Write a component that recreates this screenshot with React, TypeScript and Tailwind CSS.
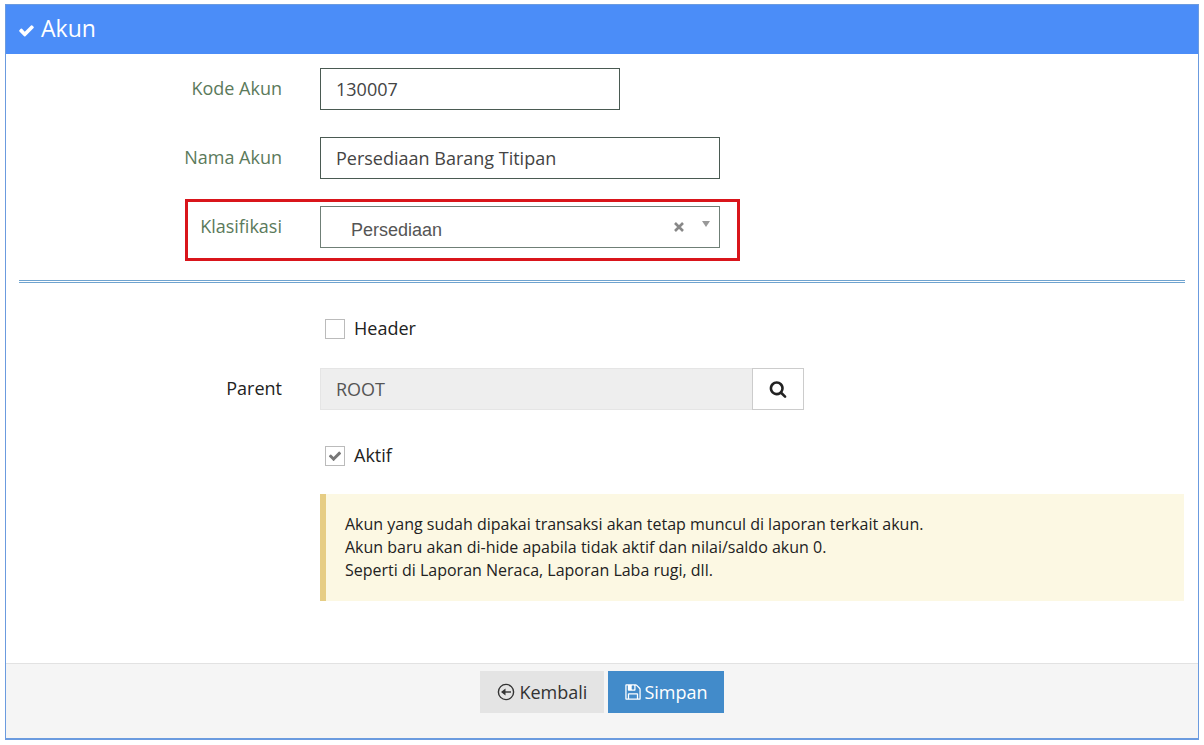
import { useState } from "react";
import type { ReactNode } from "react";

const KLASIFIKASI = ["Kas & Bank", "Piutang", "Persediaan", "Aktiva Tetap"];

const CHECK_PATH =
  "M1671 566q0 40-28 68l-724 724-136 136q-28 28-68 28t-68-28l-136-136-362-362q-28-28-28-68t28-68l136-136q28-28 68-28t68 28l294 295 656-657q28-28 68-28t68 28l136 136q28 28 28 68z";
const SEARCH_PATH =
  "M1216 832q0-185-131.5-316.5t-316.5-131.5-316.5 131.5-131.5 316.5 131.5 316.5 316.5 131.5 316.5-131.5 131.5-316.5zm512 832q0 52-38 90t-90 38q-54 0-90-38l-343-342q-179 124-399 124-143 0-273.5-55.5t-225-150-150-225-55.5-273.5 55.5-273.5 150-225 225-150 273.5-55.5 273.5 55.5 225 150 150 225 55.5 273.5q0 220-124 399l343 343q37 37 37 90z";
const SAVE_PATH =
  "M512 1536h768v-384h-768v384zm896 0h128v-896q0-14-10-38.5t-20-34.5l-281-281q-10-10-34-20t-39-10v416q0 40-28 68t-68 28h-576q-40 0-68-28t-28-68v-416h-128v1280h128v-416q0-40 28-68t68-28h832q40 0 68 28t28 68v416zm-384-928v-320q0-13-9.5-22.5t-22.5-9.5h-192q-13 0-22.5 9.5t-9.5 22.5v320q0 13 9.5 22.5t22.5 9.5h192q13 0 22.5-9.5t9.5-22.5zm640 32v928q0 40-28 68t-68 28h-1344q-40 0-68-28t-28-68v-1344q0-40 28-68t68-28h928q40 0 88 20t76 48l280 280q28 28 48 76t20 88z";

function Icon({ d, size }: { d: string; size: number }) {
  return (
    <svg width={size} height={size} viewBox="0 0 1792 1792" fill="currentColor" className="shrink-0" aria-hidden="true">
      <path d={d} />
    </svg>
  );
}

interface RowProps {
  id: string;
  label: string;
  labelClass?: string;
  children: ReactNode;
}

function Row({ id, label, labelClass = "text-[#5b7a5b]", children }: RowProps) {
  return (
    <div className="flex">
      <label htmlFor={id} className={`w-1/4 shrink-0 pt-2 pr-[22px] text-right leading-6 ${labelClass}`}>
        {label}
      </label>
      <div className="flex-1 pl-4 pr-[14px]">{children}</div>
    </div>
  );
}

function CheckRow({ label, checked, onChange }: { label: string; checked: boolean; onChange: (v: boolean) => void }) {
  return (
    <div className="ml-[25%] flex pl-[21px]">
      <label className="flex h-5 items-center gap-[9px] text-[#222]">
        <span className="relative flex size-5 items-center justify-center text-[#777]">
          <input
            type="checkbox"
            checked={checked}
            onChange={(e) => onChange(e.target.checked)}
            className="size-5 appearance-none border border-[#bbb] bg-white"
          />
          {checked && (
            <span className="pointer-events-none absolute inset-0 flex items-center justify-center">
              <Icon d={CHECK_PATH} size={14} />
            </span>
          )}
        </span>
        <span className="pb-0.5">{label}</span>
      </label>
    </div>
  );
}

export default function App() {
  const [kode, setKode] = useState("130007");
  const [nama, setNama] = useState("Persediaan Barang Titipan");
  const [klasifikasi, setKlasifikasi] = useState("Persediaan");
  const [header, setHeader] = useState(false);
  const [aktif, setAktif] = useState(true);

  return (
    <div className="bg-white px-[5px] py-1 font-['Open_Sans','Noto_Sans',sans-serif] text-lg">
      <form className="border border-b-2 border-[#6b9bdf]" onSubmit={(e) => e.preventDefault()}>
        {/* Title bar */}
        <div className="flex h-[49px] items-center gap-1.5 bg-[#4b8df8] pb-1 pl-3 text-white">
          <span className="pt-1.5">
            <Icon d={CHECK_PATH} size={17} />
          </span>
          <h1 className="text-[23px] leading-8 font-normal">Akun</h1>
        </div>

        {/* Account identity */}
        <div className="flex flex-col gap-[27px] pt-[14px]">
          <Row id="kode" label="Kode Akun">
            <input
              id="kode"
              value={kode}
              onChange={(e) => setKode(e.target.value)}
              className="block h-[42px] w-[300px] border border-[#4a5a52] px-[15px] text-[#444] outline-none"
            />
          </Row>
          <Row id="nama" label="Nama Akun">
            <input
              id="nama"
              value={nama}
              onChange={(e) => setNama(e.target.value)}
              className="block h-[42px] w-[400px] border border-[#4a5a52] px-[15px] text-[#444] outline-none"
            />
          </Row>
          <Row id="klasifikasi" label="Klasifikasi">
            <div className="relative w-[400px]">
              <div className="pointer-events-none absolute -top-[7px] -right-5 -bottom-[13px] -left-[135px] border-3 border-[#d9151b]" />
              <select
                id="klasifikasi"
                value={klasifikasi}
                onChange={(e) => setKlasifikasi(e.target.value)}
                className="block h-[42px] w-full appearance-none border border-[#6f7f76] bg-white pt-1.5 pr-16 pl-[30px] font-['Liberation_Sans',Arial,sans-serif] text-[#555] outline-none"
              >
                <option value="" />
                {KLASIFIKASI.map((k) => (
                  <option key={k}>{k}</option>
                ))}
              </select>
              <button
                type="button"
                aria-label="Hapus klasifikasi"
                onClick={() => setKlasifikasi("")}
                className="absolute top-4 right-9 text-[#888]"
              >
                <svg width="10" height="10" viewBox="0 0 10 10" stroke="currentColor" strokeWidth="2.6">
                  <path d="M1 1l8 8M9 1l-8 8" />
                </svg>
              </button>
              <svg width="8" height="6" viewBox="0 0 8 6" className="pointer-events-none absolute top-[15px] right-[10px] fill-[#999]">
                <path d="M0 0h8L4 6z" />
              </svg>
            </div>
          </Row>
        </div>

        <hr className="mx-[13px] mt-8 border-t-3 border-double border-[#6fa3cf]" />

        {/* Hierarchy and status */}
        <div className="pt-9">
          <CheckRow label="Header" checked={header} onChange={setHeader} />
          <div className="mt-[29px] mb-9">
            <Row id="parent" label="Parent" labelClass="text-[#222]">
              <div className="flex h-[42px] w-[484px]">
                <input
                  id="parent"
                  value="ROOT"
                  readOnly
                  className="min-w-0 flex-1 border border-r-0 border-[#e5e5e5] bg-[#eee] px-[15px] text-[#555] outline-none"
                />
                <button
                  type="button"
                  aria-label="Cari parent"
                  className="flex w-[52px] items-center justify-center border border-[#ccc] bg-white text-[#222]"
                >
                  <Icon d={SEARCH_PATH} size={18} />
                </button>
              </div>
            </Row>
          </div>
          <CheckRow label="Aktif" checked={aktif} onChange={setAktif} />
          <div className="mt-7 ml-[25%] pr-[14px] pl-4">
            <p className="border-l-6 border-[#e6cd84] bg-[#fcf8e3] p-[19px] text-base leading-[23px] text-[#222]">
              Akun yang sudah dipakai transaksi akan tetap muncul di laporan terkait akun.
              <br />
              Akun baru akan di-hide apabila tidak aktif dan nilai/saldo akun 0.
              <br />
              Seperti di Laporan Neraca, Laporan Laba rugi, dll.
            </p>
          </div>
        </div>

        {/* Actions */}
        <div className="mt-[62px] flex justify-center gap-1 border-t border-[#e2e2e2] bg-[#f5f5f5] pt-[7px] pb-[25px]">
          <button type="button" className="flex h-[42px] items-center gap-1 bg-[#e4e4e4] px-[17px] text-[#333]">
            <svg width="18" height="18" viewBox="0 0 18 18" fill="none" stroke="currentColor" strokeWidth="1.4" aria-hidden="true">
              <circle cx="9" cy="9" r="7.6" />
              <path d="M14 9H5" />
              <path d="M4 9l4.5-3.6v7.2z" fill="currentColor" stroke="none" />
            </svg>
            Kembali
          </button>
          <button type="submit" className="flex h-[42px] items-center gap-0.5 bg-[#428bca] px-4 text-white">
            <Icon d={SAVE_PATH} size={18} />
            Simpan
          </button>
        </div>
      </form>
    </div>
  );
}
